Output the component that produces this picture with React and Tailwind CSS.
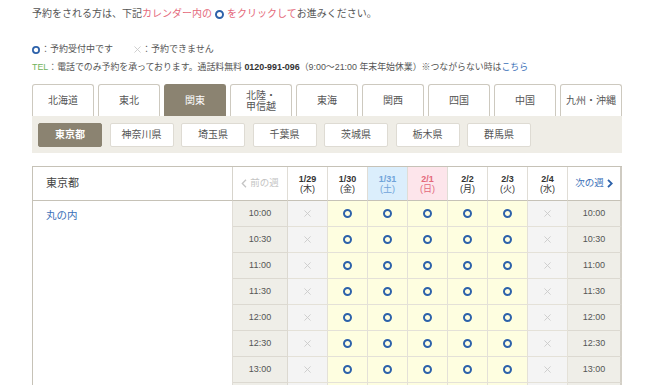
import React from "react";

const font = { fontFamily: '"Liberation Sans", "Noto Sans CJK JP", sans-serif' };

const tabs = ["北海道", "東北", "関東", "北陸・\n甲信越", "東海", "関西", "四国", "中国", "九州・沖縄"];
const prefs = ["東京都", "神奈川県", "埼玉県", "千葉県", "茨城県", "栃木県", "群馬県"];
const days = [
  { d: "1/29", w: "(木)", kind: "" },
  { d: "1/30", w: "(金)", kind: "" },
  { d: "1/31", w: "(土)", kind: "sat" },
  { d: "2/1", w: "(日)", kind: "sun" },
  { d: "2/2", w: "(月)", kind: "" },
  { d: "2/3", w: "(火)", kind: "" },
  { d: "2/4", w: "(水)", kind: "" },
];
const times = ["10:00", "10:30", "11:00", "11:30", "12:00", "12:30", "13:00", "13:30"];
// 0 = full, 1 = open
const pattern = [0, 1, 1, 1, 1, 1, 0];

const Ring = ({ size = 9, stroke = 2 }) => (
  <svg width={size} height={size} viewBox="0 0 10 10">
    <circle cx="5" cy="5" r={5 - stroke / 2} fill="none" stroke="#2d62aa" strokeWidth={stroke} />
  </svg>
);

const Cross = ({ size = 8, color = "#c9c9c9" }) => (
  <svg width={size} height={size} viewBox="0 0 8 8">
    <path d="M0.5 0.5 L7.5 7.5 M7.5 0.5 L0.5 7.5" stroke={color} strokeWidth="1" />
  </svg>
);

const App = () => {
  return (
    <div className="w-[650px] h-[385px] overflow-hidden bg-white text-[#555]" style={font}>
      <div className="pl-[32px]">
        {/* intro */}
        <p className="pt-[8px] text-[10px] leading-[12px] flex items-center">
          予約をされる方は、下記<span className="text-[#e4687a]">カレンダー内の</span>
          <span className="mx-[3px] inline-flex"><Ring size={9} stroke={2.2} /></span>
          <span className="text-[#e4687a]">をクリックして</span>お進みください。
        </p>
        <div className="mt-[24px] flex items-center text-[9px] leading-[11px]">
          <Ring size={8} stroke={2.2} />
          <span className="ml-[1px]">：予約受付中です</span>
          <span className="ml-[21px] inline-flex"><Cross size={7} /></span>
          <span className="ml-[1px]">：予約できません</span>
        </div>
        <p className="mt-[7px] text-[8.9px] leading-[11px] whitespace-nowrap">
          <span className="text-[#6fb35a]">TEL</span>：電話でのみ予約を承っております。通話料無料{" "}
          <b className="text-[#333]">0120-991-096</b>（9:00〜21:00 年末年始休業）※つながらない時は
          <span className="text-[#3a6fb8]">こちら</span>
        </p>

        {/* area tabs */}
        <div className="mt-[11px] w-[590px] flex gap-[4px]">
          {tabs.map((t) => (
            <div
              key={t}
              className={
                "w-[62px] h-[32px] flex items-center justify-center rounded-t-[3px] border border-b-0 text-[10px] leading-[11px] text-center whitespace-pre " +
                (t === "関東"
                  ? "bg-[#8b8371] border-[#8b8371] text-white"
                  : "bg-white border-[#cdc9bf] text-[#555]")
              }
            >
              {t}
            </div>
          ))}
        </div>
        <div className="w-[590px] h-[37px] bg-[#efede6] flex items-center gap-[7.5px] pl-[6px]">
          {prefs.map((p) => (
            <div
              key={p}
              className={
                "w-[64px] h-[24px] flex items-center justify-center rounded-[2px] border text-[10px] " +
                (p === "東京都"
                  ? "bg-[#8b8371] border-[#8b8371] text-white font-bold"
                  : "bg-white border-[#dedbd3] text-[#555]")
              }
            >
              {p}
            </div>
          ))}
        </div>

        {/* calendar */}
        <div className="mt-[13px] w-[590px] grid grid-cols-[200px_55px_repeat(7,40px)_54px] border-t border-l border-[#c6c2b7]">
          <div className="h-[34px] flex items-center pl-[13px] text-[11px] text-[#444] border-r border-b border-[#d7d4cc] border-b-[#c6c2b7]">
            東京都
          </div>
          <div className="h-[34px] flex items-center justify-center gap-[3px] text-[9.5px] text-[#c4c4c4] border-r border-b border-[#e0ddd6] border-b-[#c6c2b7]">
            <svg width="6" height="9" viewBox="0 0 6 9">
              <path d="M5 0.8 L1.3 4.5 L5 8.2" fill="none" stroke="#c4c4c4" strokeWidth="1.3" />
            </svg>
            前の週
          </div>
          {days.map((d) => (
            <div
              key={d.d}
              className={
                "h-[34px] flex flex-col items-center justify-center text-[9px] leading-[10px] border-r border-b border-[#e0ddd6] border-b-[#c6c2b7] " +
                (d.kind === "sat"
                  ? "bg-[#dbeefc] text-[#6fa3d9]"
                  : d.kind === "sun"
                  ? "bg-[#fde5eb] text-[#e4687a]"
                  : "bg-white text-[#333]")
              }
            >
              <span className="font-bold">{d.d}</span>
              <span>{d.w}</span>
            </div>
          ))}
          <div className="h-[34px] flex items-center justify-center gap-[3px] text-[9.5px] text-[#3a6fb8] border-r-2 border-b border-[#cfcbc2] border-b-[#c6c2b7]">
            次の週
            <svg width="6" height="9" viewBox="0 0 6 9">
              <path d="M1 0.8 L4.7 4.5 L1 8.2" fill="none" stroke="#2d62aa" strokeWidth="1.8" />
            </svg>
          </div>

          <div
            className="pl-[13px] pt-[7px] text-[10.5px] text-[#3a6fb8] border-r border-[#e0ddd6]"
            style={{ gridRow: "2 / span 8" }}
          >
            丸の内
          </div>
          {times.map((t) => (
            <React.Fragment key={t}>
              <div className="h-[26px] flex items-center justify-center bg-[#efeee8] text-[9px] text-[#555] border-r border-b border-[#dcd9d1]">
                {t}
              </div>
              {pattern.map((p, i) => (
                <div
                  key={i}
                  className={
                    "h-[26px] flex items-center justify-center border-r border-b border-[#e4e1d8] " +
                    (p ? "bg-[#fefee0]" : "bg-[#f4f4f4]")
                  }
                >
                  {p ? <Ring size={9} stroke={2.2} /> : <Cross size={7} />}
                </div>
              ))}
              <div className="h-[26px] flex items-center justify-center bg-[#efeee8] text-[9px] text-[#555] border-r-2 border-b border-[#d4d0c7] border-b-[#dcd9d1]">
                {t}
              </div>
            </React.Fragment>
          ))}
        </div>
      </div>
    </div>
  );
};

export default App;
